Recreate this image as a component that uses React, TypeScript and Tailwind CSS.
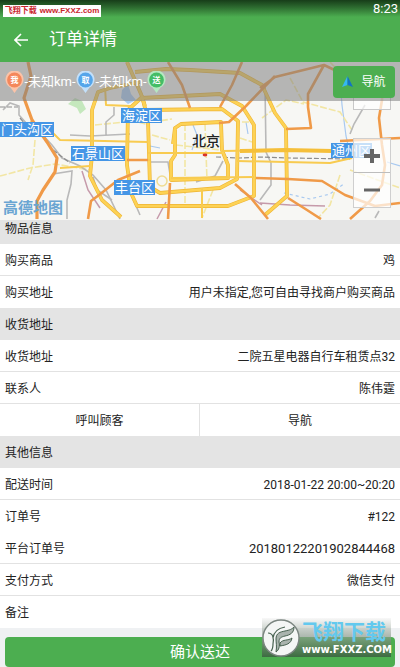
import React from "react";

type Row = { label: string; value: string; large?: boolean; line?: boolean };

const goods: Row[] = [
  { label: "购买商品", value: "鸡", line: true },
  { label: "购买地址", value: "用户未指定,您可自由寻找商户购买商品" },
];

const receiver: Row[] = [
  { label: "收货地址", value: "二院五星电器自行车租赁点32", line: true },
  { label: "联系人", value: "陈伟霆", line: true },
];

const others: Row[] = [
  { label: "配送时间", value: "2018-01-22 20:00~20:20", line: true },
  { label: "订单号", value: "#122" },
  { label: "平台订单号", value: "20180122201902844468", large: true, line: true },
  { label: "支付方式", value: "微信支付", line: true },
  { label: "备注", value: "" },
];

function Rows({ items }: { items: Row[] }) {
  return (
    <dl>
      {items.map((r) => (
        <div
          key={r.label}
          className={`flex h-8 items-center justify-between bg-white px-[5px] pt-0.5 ${r.line ? "border-b border-[#e2e2e2]" : ""}`}
        >
          <dt>{r.label}</dt>
          <dd className={r.large ? "text-[13px]" : ""}>{r.value}</dd>
        </div>
      ))}
    </dl>
  );
}

function SectionTitle({ children }: { children: React.ReactNode }) {
  return <h2 className="flex h-8 items-center bg-[#e4e4e4] px-[5px] pt-0.5">{children}</h2>;
}

function Pin({ color, ring, text }: { color: string; ring: string; text: string }) {
  return (
    <svg width="19" height="22" viewBox="0 0 19 22" className="shrink-0">
      <path d="M9.5 22 L5.5 16.5 A9 9 0 1 1 13.5 16.5 Z" fill={ring} />
      <circle cx="9.5" cy="9" r="7.4" fill={color} />
      <text x="9.5" y="12" textAnchor="middle" fontSize="8" fontWeight="700" fill="#fff">
        {text}
      </text>
    </svg>
  );
}

function Place({ className, children }: { className: string; children: React.ReactNode }) {
  return (
    <span className={`absolute h-[15px] whitespace-nowrap bg-[#4596e6] px-px text-[13px] leading-[15px] text-white ${className}`}>
      {children}
    </span>
  );
}

function MapDrawing() {
  return (
    <svg className="block h-full w-full" viewBox="0 62 400 158" preserveAspectRatio="xMidYMid slice" fill="none" aria-hidden="true">
      <rect x="0" y="62" width="400" height="158" fill="#f7f7f4" />
      <path d="M68 104 L75 98 82 101 86 109 80 114 77 108Z" fill="#c5e8bd" />
      <path d="M122 90 L128 84 131 94 136 100 128 104 121 98Z" fill="#a9cdf5" />
      <g stroke="#a8c9f0" strokeWidth="1.2">
        <path d="M340 80 L342 105 346 136 348 145 M150 146 L160 148 M193 125 L197 135 192 150 M246 122 L248 134 M387 162 L400 166" />
        <path d="M284 193 L310 199 330 194 345 183" strokeDasharray="3 3" />
      </g>
      <g stroke="#f2e6a4" strokeWidth="1.6" strokeDasharray="7 2">
        <path d="M0 176 L30 168 55 164 90 170 M35 140 L33 165 28 180" />
        <path d="M290 78 L303 102 340 112 352 130 M262 118 L286 100 304 104" />
        <path d="M340 175 L330 205 318 218 M350 170 L400 188 M330 62 L345 78" />
        <path d="M185 124 L185 204 M205 124 L207 180 M152 135 L170 140 M152 122 L172 119 M176 145 L220 150 M213 190 L202 218" />
        <path d="M130 120 L150 125 M95 125 L125 122 M242 122 L250 122 M240 138 L252 142" />
      </g>
      <g stroke="#b9b9b9" strokeWidth="1.6">
        <path d="M3 110 L10 103 19 106 19 115 27 124 40 132 52 145 62 158 80 166 93 175 106 190 120 219" />
        <path d="M53 174 L72 171 71 184 67 200 67 219 M70 135 L90 136 130 134 M106 136 L106 122 114 115 114 107" />
        <path d="M93 177 L97 190 112 200 M150 162 L168 162 170 174 M223 161 L215 176 196 182" />
        <path d="M265 85 L266 152 271 163 271 185 260 200 M350 134 L354 124 365 105" />
        <path d="M130 192 L140 215 M375 218 L379 211" />
      </g>
      <g stroke="#8d8d8d" strokeWidth="1.2" strokeDasharray="5 2">
        <path d="M0 107 L18 107 M216 157 L240 158 260 157 290 158 350 159 M53 150 L70 163 M20 118 L33 133" />
      </g>
      <path d="M82 171 L88 190 100 208 M260 203 L290 205 325 206 M157 219 L166 202 M240 190 L262 205" stroke="#c69aaa" strokeWidth="1.5" />
      <g stroke="#eeb535" strokeWidth="3.8" strokeLinejoin="round">
        <path d="M140 82 L110 88 98 92 92 110 92 155 90 176 102 200 121 217" />
        <path d="M127 62 L141 94 145 106 M128 110 L127 165 131 193 137 206 228 206 254 196 254 125 242 106 220 94 141 98 128 110" />
        <path d="M135 72 L166 69 190 70 240 73 262 85 275 113 286 128 287 196 265 215" />
        <path d="M142 96 L148 120 150 187 160 193 220 188 237 179 238 121 222 109 145 110" />
        <path d="M173 144 L175 128 181 124 221 122 222 150 228 165 228 178 171 180 171 161 175 155 175 130" />
      </g>
      <g stroke="#fdd254" strokeWidth="2.6" strokeLinejoin="round">
        <path d="M140 82 L110 88 98 92 92 110 92 155 90 176 102 200 121 217" />
        <path d="M127 62 L141 94 145 106 M128 110 L127 165 131 193 137 206 228 206 254 196 254 125 242 106 220 94 141 98 128 110" />
        <path d="M135 72 L166 69 190 70 240 73 262 85 275 113 286 128 287 196 265 215" />
        <path d="M142 96 L148 120 150 187 160 193 220 188 237 179 238 121 222 109 145 110" />
        <path d="M173 144 L175 128 181 124 221 122 222 150 228 165 228 178 171 180 171 161 175 155 175 130" />
      </g>
      <g stroke="#f8cb50" strokeWidth="2.6" strokeLinejoin="round">
        <path d="M30 122 L48 128 60 140 148 142 M148 153 L222 153 M222 151 L285 150 332 151" strokeWidth="2" />
        <path d="M127 160 L150 160 M237 161 L285 162 330 163 352 158 M171 178 L254 177 M60 168 L90 166 M202 188 L202 218 M105 86 L106 105 130 106" strokeWidth="2" />
      </g>
      <path d="M240 151 L285 150 L332 151" stroke="#f5bf3a" strokeWidth="4" />
      <circle cx="162" cy="181" r="5" stroke="#efdc91" strokeWidth="1.5" />
      <g stroke="#f09a48" strokeWidth="2.6" strokeLinejoin="round">
        <path d="M28 62 L31 76 24 98 32 120 47 142 57 158 55 172 43 190 37 201 37 219" strokeWidth="3.2" />
        <path d="M140 171 L118 180 99 195 91 201 88 219 M127 160 L148 160" />
        <path d="M170 183 L168 219 M168 62 L182 85 190 108 M242 62 L232 85 220 107" />
        <path d="M275 76 L246 106 229 122 219 123 M260 88 L275 77 324 65 345 75 M324 65 L308 94 308 107 311 128 286 129" />
        <path d="M256 178 L288 179 322 181 345 195 375 206 400 203 M235 184 L251 198 268 219 M288 198 L307 210 321 219" />
        <path d="M350 219 L370 201 382 185 385 165 382 145 379 118 382 100 384 70 M340 141 L400 138" />
      </g>
      <ellipse cx="205" cy="155" rx="2.4" ry="1.4" fill="#d8332b" />
    </svg>
  );
}

function MapPanel() {
  return (
    <section aria-label="地图" className="relative z-10 h-[158px] overflow-hidden">
      <MapDrawing />
      <Place className="left-[121px] top-[46px]">海淀区</Place>
      <Place className="left-0 top-[60px]">门头沟区</Place>
      <Place className="left-[71px] top-[84px]">石景山区</Place>
      <Place className="left-[114px] top-[118px]">丰台区</Place>
      <Place className="left-[331px] top-[81px]">通州区</Place>
      <span className="absolute left-[192px] top-[71px] text-sm leading-4 font-medium text-[#222]">北京</span>
      <span className="absolute left-[3px] top-[138px] text-[15px] leading-4 font-bold text-[#6aa5d2]">高德地图</span>

      <div className="absolute right-[9px] top-[76px] flex w-[38px] flex-col border border-[#cfcfcf] bg-white/70">
        <button aria-label="放大" className="flex h-[34px] items-center justify-center border-b border-[#bdbdbd]">
          <svg width="16" height="16" viewBox="0 0 16 16">
            <path d="M8 1 V15 M0 8 H16" stroke="#666" strokeWidth="4" />
          </svg>
        </button>
        <button aria-label="缩小" className="flex h-[34px] items-center justify-center">
          <svg width="16" height="16" viewBox="0 0 16 16">
            <path d="M0 8 H16" stroke="#666" strokeWidth="3" />
          </svg>
        </button>
      </div>
      <div className="absolute right-[9px] top-[8px] h-10 w-[38px] border border-[#c8c8c8] bg-white/70" />

      <div className="absolute inset-x-0 top-0 flex h-[39px] items-center justify-between bg-[#7f7f7f]/55 pl-[5px] pr-[5px] text-white">
        <div className="flex items-center">
          <Pin color="#f4875b" ring="#fbc3a8" text="我" />
          <span className="w-[52px] whitespace-nowrap text-center text-[13px]">-未知km-</span>
          <Pin color="#55a5ea" ring="#c3e0fa" text="取" />
          <span className="w-[52px] whitespace-nowrap text-center text-[13px]">-未知km-</span>
          <Pin color="#45bd66" ring="#b5e8c0" text="送" />
        </div>
        <button className="flex h-8 w-[62px] items-center justify-center gap-2 rounded-[4px] bg-[#4cae50] text-xs">
          <svg width="11" height="11" viewBox="0 0 11 11">
            <path d="M5.5 0 L0 11 L5.5 9Z" fill="#35b7f3" />
            <path d="M5.5 0 L11 11 L5.5 9Z" fill="#1273c4" />
          </svg>
          导航
        </button>
      </div>
    </section>
  );
}

function SiteBadge() {
  return (
    <div className="absolute right-[9px] top-[-19px] flex h-[39px] w-[129px] items-center gap-[2px] bg-linear-to-b from-[#bbb]/10 via-[#8c9c8c]/70 to-[#3d6b42]">
      <svg width="38" height="38" viewBox="0 0 38 38" className="shrink-0">
        <circle cx="19" cy="19" r="18" fill="#f4f6f5" stroke="#7b8580" strokeWidth="1.4" />
        <path d="M14 33 C15 27 14 24 14 20 C14 14 18 13 23 12 C28 11 30 10 32 8 C32 14 28 16 23 17 C19 18 17 19 17 23 C18 27 17 31 14 33Z" fill="#a9b3ad" stroke="#46604f" strokeWidth="1" />
        <path d="M18 24 C21 20 26 22 30 19 C29 25 24 26 18 27Z" fill="#a9b3ad" stroke="#46604f" strokeWidth="1" />
        <path d="M6 14 C11 14 12 19 11 25 C11 29 10 31 9 32 M11 19 C12 12 17 9 23 8" fill="none" stroke="#46604f" strokeWidth="1.2" />
      </svg>
      <div className="flex flex-col whitespace-nowrap font-bold">
        <span className="text-[21px] leading-6 text-[#63c9ee]">飞翔下载</span>
        <span className="font-['DejaVu_Sans'] text-[10px] leading-3 text-white">www.FXXZ.COM</span>
      </div>
    </div>
  );
}

export default function App() {
  return (
    <div className="h-screen overflow-hidden bg-[#eff1f3] font-[Roboto,'Noto_Sans_CJK_SC',sans-serif] text-xs text-[#222]">
      <header className="bg-[#4cae50] text-white">
        <div className="flex h-[17px] items-end justify-between bg-linear-to-b from-[#173d19] to-[#4cae50] pl-[3px] pr-[2px]">
          <span className="flex h-3 w-[98px] items-center justify-center gap-[3px] whitespace-nowrap bg-white font-bold text-[#c9252d]">
            <span className="text-[8px] leading-3">飞翔下载</span>
            <span className="font-['Liberation_Sans'] text-[8px] leading-3">www.FXXZ.com</span>
          </span>
          <time className="text-[13px] leading-4">8:23</time>
        </div>
        <div className="flex h-[45px] items-center gap-[21px] pl-[14px]">
          <button aria-label="返回">
            <svg width="14" height="14" viewBox="0 0 14 14" fill="none" stroke="#fff" strokeWidth="1.6">
              <path d="M14 7 H1.5 M7 1 L1 7 L7 13" />
            </svg>
          </button>
          <h1 className="text-[17px]">订单详情</h1>
        </div>
      </header>

      <MapPanel />

      <main className="-mt-2">
        <SectionTitle>物品信息</SectionTitle>
        <Rows items={goods} />
        <SectionTitle>收货地址</SectionTitle>
        <Rows items={receiver} />
        <div className="grid h-8 grid-cols-2 divide-x divide-[#e2e2e2] bg-white">
          <button className="pt-0.5">呼叫顾客</button>
          <button className="pt-0.5">导航</button>
        </div>
        <SectionTitle>其他信息</SectionTitle>
        <Rows items={others} />
      </main>

      <footer className="relative mt-[9px] px-[5px]">
        <button className="h-[30px] w-full rounded-[4px] bg-[#4cae50] pt-0.5 text-[15px] text-white">确认送达</button>
        <SiteBadge />
      </footer>
    </div>
  );
}
